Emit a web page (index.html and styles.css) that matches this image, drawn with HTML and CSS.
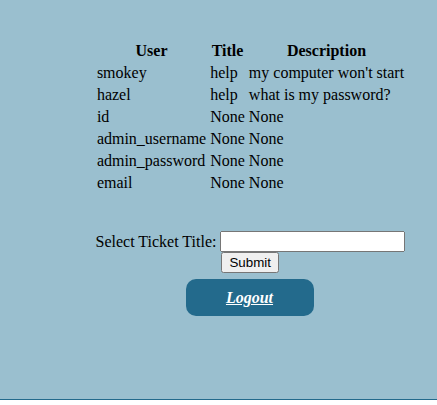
FILE: index.html
```html
<!DOCTYPE html>
<html>
<head>
<meta charset="utf-8">
<link rel="stylesheet" href="styles.css">
</head>
<body>
<div class="page">
  <table class="tickets">
    <tr><th>User</th><th>Title</th><th>Description</th></tr>
    <tr><td>smokey</td><td>help</td><td>my computer won't start</td></tr>
    <tr><td>hazel</td><td>help</td><td>what is my password?</td></tr>
    <tr><td>id</td><td>None</td><td>None</td></tr>
    <tr><td>admin_username</td><td>None</td><td>None</td></tr>
    <tr><td>admin_password</td><td>None</td><td>None</td></tr>
    <tr><td>email</td><td>None</td><td>None</td></tr>
  </table>
  <form class="ticket-form">
    <label class="label" for="title">Select Ticket Title:</label>
    <input class="title-input" id="title" type="text">
    <span></span>
    <input class="submit" type="submit" value="Submit">
  </form>
  <div class="logout"><a href="#">Logout</a></div>
</div>
</body>
</html>
```
FILE: styles.css
```css
html, body {
  margin: 0;
  padding: 0;
  background: #ffffff;
}
.page {
  box-sizing: border-box;
  min-height: 400px;
  background: #9abfcf;
  border-bottom: 1px solid #236a8c;
  padding: 39px 0 0 64px;
  display: flex;
  flex-direction: column;
  align-items: center;
  font-family: "Liberation Serif", "Times New Roman", serif;
  font-size: 16px;
  color: #000;
}
.tickets {
  border-spacing: 2px;
}
.tickets th, .tickets td {
  padding: 1px;
  text-align: left;
}
.tickets th {
  text-align: center;
}
.ticket-form {
  margin-top: 36px;
  display: grid;
  grid-template-columns: auto auto;
  column-gap: 4px;
  align-items: center;
  justify-items: start;
}
.title-input {
  box-sizing: border-box;
  width: 185px;
  height: 21px;
  margin: 0;
}
.submit {
  margin: 0 0 0 1px;
  font-family: "Liberation Sans", Arial, sans-serif;
  font-size: 13.33px;
}
.logout {
  margin: 6px 2px 0 0;
  width: 128px;
  height: 37px;
  border-radius: 10px;
  background: #236a8c;
  display: flex;
  align-items: center;
  justify-content: center;
}
.logout a {
  color: #ffffff;
  font-weight: bold;
  font-style: italic;
  text-decoration: underline;
}
```
